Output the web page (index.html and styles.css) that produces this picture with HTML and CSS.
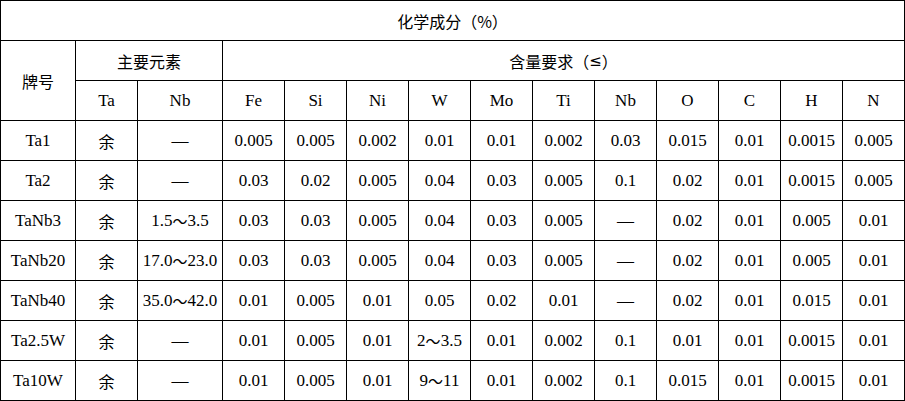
FILE: index.html
```html
<!DOCTYPE html>
<html lang="zh">
<head>
<meta charset="utf-8">
<link rel="stylesheet" href="styles.css">
</head>
<body>
<div class="grid">
  <div class="c full zh">化学成分（%）</div>
  <div class="c rows2 zh">牌号</div>
  <div class="c span2 zh">主要元素</div>
  <div class="c span11 zh">含量要求（<span class="le">≤</span>）</div>
  <div class="c">Ta</div><div class="c">Nb</div><div class="c">Fe</div><div class="c">Si</div><div class="c">Ni</div><div class="c">W</div><div class="c">Mo</div><div class="c">Ti</div><div class="c">Nb</div><div class="c">O</div><div class="c">C</div><div class="c">H</div><div class="c">N</div>

  <div class="c">Ta1</div><div class="c zh">余</div><div class="c">—</div><div class="c">0.005</div><div class="c">0.005</div><div class="c">0.002</div><div class="c">0.01</div><div class="c">0.01</div><div class="c">0.002</div><div class="c">0.03</div><div class="c">0.015</div><div class="c">0.01</div><div class="c">0.0015</div><div class="c">0.005</div>

  <div class="c">Ta2</div><div class="c zh">余</div><div class="c">—</div><div class="c">0.03</div><div class="c">0.02</div><div class="c">0.005</div><div class="c">0.04</div><div class="c">0.03</div><div class="c">0.005</div><div class="c">0.1</div><div class="c">0.02</div><div class="c">0.01</div><div class="c">0.0015</div><div class="c">0.005</div>

  <div class="c">TaNb3</div><div class="c zh">余</div><div class="c">1.5<span class="w">～</span>3.5</div><div class="c">0.03</div><div class="c">0.03</div><div class="c">0.005</div><div class="c">0.04</div><div class="c">0.03</div><div class="c">0.005</div><div class="c">—</div><div class="c">0.02</div><div class="c">0.01</div><div class="c">0.005</div><div class="c">0.01</div>

  <div class="c">TaNb20</div><div class="c zh">余</div><div class="c">17.0<span class="w">～</span>23.0</div><div class="c">0.03</div><div class="c">0.03</div><div class="c">0.005</div><div class="c">0.04</div><div class="c">0.03</div><div class="c">0.005</div><div class="c">—</div><div class="c">0.02</div><div class="c">0.01</div><div class="c">0.005</div><div class="c">0.01</div>

  <div class="c">TaNb40</div><div class="c zh">余</div><div class="c">35.0<span class="w">～</span>42.0</div><div class="c">0.01</div><div class="c">0.005</div><div class="c">0.01</div><div class="c">0.05</div><div class="c">0.02</div><div class="c">0.01</div><div class="c">—</div><div class="c">0.02</div><div class="c">0.01</div><div class="c">0.015</div><div class="c">0.01</div>

  <div class="c">Ta2.5W</div><div class="c zh">余</div><div class="c">—</div><div class="c">0.01</div><div class="c">0.005</div><div class="c">0.01</div><div class="c">2<span class="w">～</span>3.5</div><div class="c">0.01</div><div class="c">0.002</div><div class="c">0.1</div><div class="c">0.01</div><div class="c">0.01</div><div class="c">0.0015</div><div class="c">0.01</div>

  <div class="c">Ta10W</div><div class="c zh">余</div><div class="c">—</div><div class="c">0.01</div><div class="c">0.005</div><div class="c">0.01</div><div class="c">9<span class="w">～</span>11</div><div class="c">0.01</div><div class="c">0.002</div><div class="c">0.1</div><div class="c">0.015</div><div class="c">0.01</div><div class="c">0.0015</div><div class="c">0.01</div>
</div>
</body>
</html>
```
FILE: styles.css
```css
html, body {
  margin: 0;
  padding: 0;
  background: #fff;
}
.grid {
  display: grid;
  grid-template-columns: 74px 61px 84px repeat(11, 61px);
  grid-auto-rows: 39px;
  gap: 1px;
  padding: 1px;
  background: #000;
  width: 903px;
  font-family: "Liberation Serif", "Noto Sans CJK SC", serif;
  font-size: 17px;
  color: #000;
}
.c {
  background: #fff;
  display: flex;
  align-items: center;
  justify-content: center;
  white-space: nowrap;
}
.zh {
  font-family: "Noto Sans CJK SC", sans-serif;
  font-size: 16px;
}
.le {
  font-family: "DejaVu Sans", sans-serif;
  font-size: 15px;
}
.w {
  font-family: "Noto Sans CJK SC", sans-serif;
  font-size: 15px;
}
.full { grid-column: 1 / -1; }
.rows2 { grid-row: span 2; }
.span2 { grid-column: span 2; }
.span11 { grid-column: span 11; }
```
